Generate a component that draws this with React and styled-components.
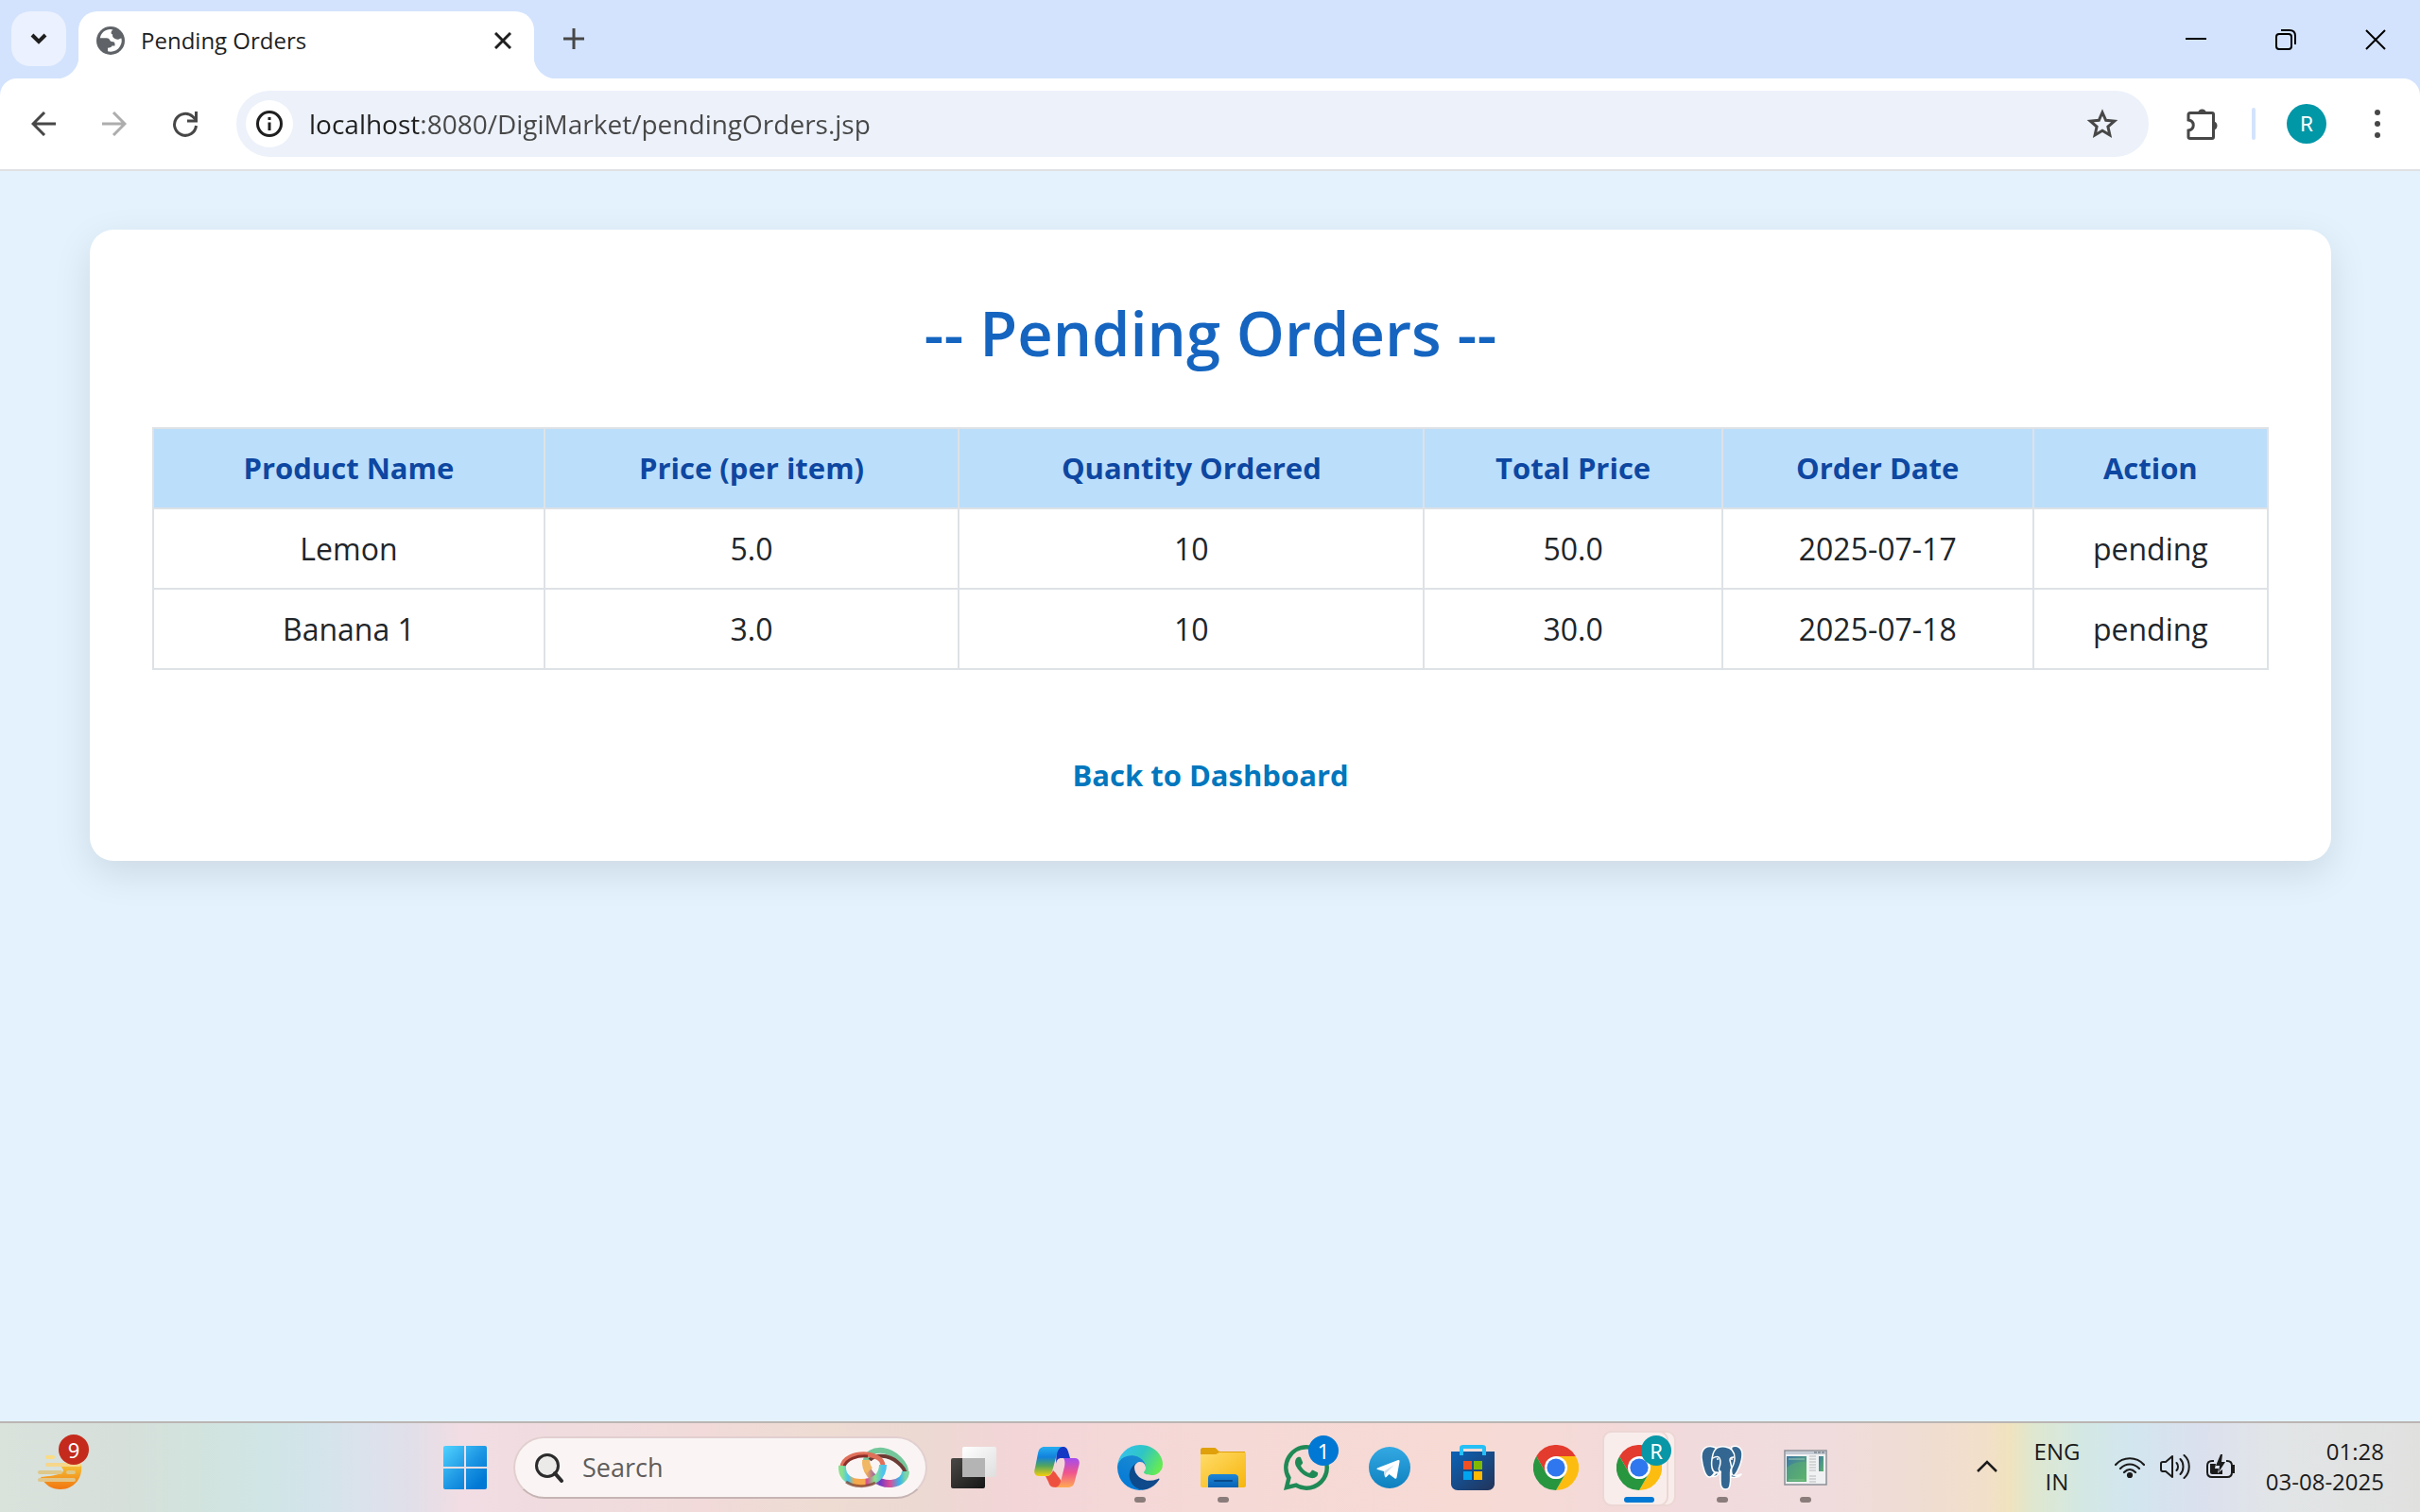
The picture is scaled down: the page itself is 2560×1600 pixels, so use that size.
import React from "react";
import styled, { createGlobalStyle, css } from "styled-components";

const GlobalStyle = createGlobalStyle`
  *, *::before, *::after { box-sizing: border-box; }
  body {
    margin: 0;
    font-family: "Open Sans", "Noto Sans", sans-serif;
    color: #212529;
  }
  button, input { font: inherit; color: inherit; }
`;

/* ---------- shell ---------- */

const Desktop = styled.div`
  display: flex;
  flex-direction: column;
  min-height: 100vh;
  background: #e3f2fd;
`;

const PlainButton = styled.button`
  display: flex;
  align-items: center;
  justify-content: center;
  flex: none;
  padding: 0;
  border: 0;
  background: none;
`;

/* ---------- browser tab strip ---------- */

const TabStrip = styled.header`
  display: flex;
  align-items: flex-end;
  height: 83px;
  padding-left: 12px;
  background: #d3e3fd;
`;

const TabSearch = styled(PlainButton)`
  width: 58px;
  height: 58px;
  margin-bottom: 13px;
  border-radius: 20px;
  background: #ebf1fe;
`;

const Tab = styled.div`
  position: relative;
  display: flex;
  align-items: center;
  width: 482px;
  height: 71px;
  margin-left: 13px;
  padding: 0 16px 10px 19px;
  border-radius: 20px 20px 0 0;
  background: #fff;

  &::before,
  &::after {
    content: "";
    position: absolute;
    bottom: 0;
    width: 24px;
    height: 24px;
  }
  &::before {
    right: 100%;
    background: radial-gradient(circle at 0 0, transparent 24px, #fff 25px);
  }
  &::after {
    left: 100%;
    background: radial-gradient(circle at 100% 0, transparent 24px, #fff 25px);
  }
`;

const TabTitle = styled.span`
  flex: 1;
  padding-left: 17px;
  font-size: 24px;
  line-height: 32px;
  color: #1f1f1f;
`;

const TabClose = styled(PlainButton)`
  width: 34px;
  height: 34px;
`;

const NewTab = styled(PlainButton)`
  width: 60px;
  height: 60px;
  margin: 0 0 12px 12px;
`;

const WindowControls = styled.div`
  display: flex;
  align-self: stretch;
  margin-left: auto;
`;

const WindowButton = styled(PlainButton)`
  width: 95px;
  height: 83px;
`;

/* ---------- browser toolbar ---------- */

const ToolbarBack = styled.div`
  background: #d3e3fd;
`;

const Toolbar = styled.nav`
  display: flex;
  align-items: center;
  height: 98px;
  padding: 0 10px 0 8px;
  border-bottom: 2px solid #e0e1e3;
  border-radius: 18px 18px 0 0;
  background: #fff;
`;

const ToolButton = styled(PlainButton)`
  width: ${(p) => p.$width || 75}px;
  height: 70px;
  margin-left: ${(p) => p.$gap || 0}px;
`;

const AddressBar = styled.div`
  display: flex;
  align-items: center;
  flex: 1;
  height: 70px;
  margin-left: 17px;
  padding: 0 10px;
  border-radius: 35px;
  background: #ecf1fa;
`;

const SiteInfo = styled(PlainButton)`
  width: 50px;
  height: 50px;
  border-radius: 50%;
  background: #fff;
`;

/* The host part is darker than the rest of the address. */
const UrlInput = styled.input`
  flex: 1;
  min-width: 0;
  margin-left: 17px;
  padding: 0;
  border: 0;
  outline: 0;
  background: linear-gradient(90deg, #1f1f1f 116px, #474747 116px);
  background-clip: text;
  -webkit-text-fill-color: transparent;
  font-size: 28px;
  line-height: 40px;
  color: #474747;
`;

const Divider = styled.span`
  width: 4px;
  height: 34px;
  margin-left: 17px;
  border-radius: 2px;
  background: #d3e3fd;
`;

const Avatar = styled(PlainButton)`
  width: 42px;
  height: 42px;
  margin-left: 33px;
  border-radius: 50%;
  background: #0097a7;
  color: #fff;
  font-family: Roboto, sans-serif;
  font-size: 22px;
`;

/* ---------- page ---------- */

const Page = styled.main`
  flex: 1;
  padding: 62px 94px 62px 95px;
`;

const Card = styled.section`
  display: flex;
  flex-direction: column;
  align-items: center;
  padding: 66px;
  border-radius: 25px;
  background: #fff;
  box-shadow: 0 13px 40px rgba(0, 0, 0, 0.1);
`;

const Title = styled.h1`
  margin: 0 0 57px;
  font-size: 65px;
  font-weight: 600;
  line-height: 86px;
  color: #1565c0;
`;

const OrdersTable = styled.table`
  width: 100%;
  table-layout: fixed;
  border-collapse: collapse;
  font-size: 32px;
  line-height: 49px;
  text-align: center;
`;

const Col = styled.col`
  width: ${(p) => p.$share}%;
`;

const cell = css`
  padding: 17px 8px;
  border: 2px solid #dee2e6;
`;

const HeadCell = styled.th`
  ${cell}
  background: #bbdefb;
  font-size: 31px;
  font-weight: 700;
  color: #0d47a1;
`;

const Cell = styled.td`
  ${cell}
`;

const BackLink = styled.a`
  margin-top: 86px;
  font-size: 31px;
  font-weight: 700;
  line-height: 50px;
  color: #0277bd;
  text-decoration: none;
`;

/* ---------- taskbar ---------- */

const Taskbar = styled.footer`
  display: grid;
  grid-template-columns: 448px auto 1fr;
  height: 96px;
  border-top: 2px solid #bbb5b3;
  background: linear-gradient(
    90deg,
    #d9e2db 0%, #d6dfda 5%, #d2e3dd 8%, #d0e5e6 11%, #d3e4ea 13%,
    #dbe2ec 15%, #e1dfe9 17%, #f1dde3 19%, #f0dcdf 23%, #f1dad9 29%,
    #eedcd3 34%, #ecd9d2 38%, #f3d5d8 42%, #f5d9d6 50%, #f7dad4 61%,
    #f1dadc 70%, #f0dcde 75%, #efdcd3 79%, #f2dfca 82%, #f0e3be 83%,
    #dfe7cf 84%, #d3e8e3 86%, #d2e6ef 88%, #dbe0ee 91%, #e2e5e7 94%,
    #e0e1df 100%
  );
  color: #1b1b1b;
`;

const WidgetButton = styled(PlainButton)`
  position: relative;
  width: 56px;
  height: 56px;
  margin: 20px 0 0 36px;
`;

const Badge = styled.span`
  position: absolute;
  top: -8px;
  right: ${(p) => p.$right || -2}px;
  width: 32px;
  height: 32px;
  border-radius: 50%;
  background: ${(p) => p.$tone};
  color: #fff;
  font-family: "Noto Sans", sans-serif;
  font-size: 22px;
  line-height: 32px;
  text-align: center;
`;

const Apps = styled.div`
  display: flex;
  align-items: center;
`;

const AppButton = styled(PlainButton)`
  position: relative;
  width: 88px;
  height: 94px;

  ${(p) =>
    p.$active &&
    css`
      &::before,
      &::after {
        content: "";
        position: absolute;
        top: 8px;
        left: 5px;
        width: 70px;
        height: 80px;
        border: 2px solid #ecd7d4;
        border-radius: 10px;
        background: #f9edeb;
      }
      &::before {
        width: 78px;
      }
    `}
`;

const IconBox = styled.span`
  position: relative;
  z-index: 1;
  display: flex;
  align-items: center;
  justify-content: center;
  width: 52px;
  height: 52px;
`;

const Indicator = styled.span`
  position: absolute;
  z-index: 1;
  bottom: 10px;
  width: ${(p) => (p.$active ? 32 : 12)}px;
  height: 6px;
  border-radius: 3px;
  background: ${(p) => (p.$active ? "#0078d4" : "#8a7c7a")};
`;

const SearchBox = styled.label`
  display: flex;
  align-items: center;
  width: 438px;
  height: 66px;
  margin: 0 5px 0 7px;
  padding: 0 16px 0 20px;
  border: 2px solid #e2cfd0;
  border-bottom-color: #c6b3b3;
  border-radius: 33px;
  background: #faf5f4;
`;

const SearchInput = styled.input`
  flex: 1;
  min-width: 0;
  margin-left: 19px;
  padding: 0;
  border: 0;
  outline: 0;
  background: none;
  font-size: 27px;
  line-height: 36px;

  &::placeholder {
    color: #5f5c5c;
    opacity: 1;
  }
`;

const Tray = styled.div`
  display: flex;
  align-items: center;
  justify-content: flex-end;
  padding-right: 38px;
  font-size: 24px;
  line-height: 32px;
`;

const TrayButton = styled(PlainButton)`
  flex-direction: column;
  width: ${(p) => p.$width}px;
  height: 94px;
  padding-bottom: 2px;
`;

const TrayStatus = styled(PlainButton)`
  gap: 16px;
  height: 94px;
  margin: 0 7px 0 21px;
  padding-bottom: 2px;
`;

const Clock = styled(PlainButton)`
  flex-direction: column;
  align-items: flex-end;
  width: 150px;
  height: 94px;
  padding-bottom: 2px;
`;

/* ---------- icons ---------- */

const Glyph = ({ w, h = w, box, sw = 3, color = "#474747", children }) => (
  <svg width={w} height={h} viewBox={box || `0 0 ${w} ${h}`} fill="none" stroke={color} strokeWidth={sw} aria-hidden="true">
    {children}
  </svg>
);

const Globe = () => (
  <svg width="30" height="30" viewBox="0 0 30 30" aria-hidden="true">
    <circle cx="15" cy="15" r="15" fill="#5f6368" />
    <path
      fill="#fff"
      d="M17.5 3.6c-1.4 1-1.9 1.8-1.9 3.2 0 1 .5 1.5 1.6 1.7-.4 1.700-.1 2.900 1 3.600 1.400.9 2.600 1.600 3.900 1.600 1.700 0 2.800-1 4.300-1.300A11.700 11.700 0 0 1 12 26.300v-3.600c2.300 0 4-.6 4.500-2.100h3v-1.900c0-2-1-2.700-3.300-2.700-1.200 0-1.600-.6-2.100-1.700-.6-1.300-1.500-2.100-3.300-2.100H3.900c.8-5.300 5.400-9.100 10.800-9.100 1 0 1.900.2 2.800.500z"
    />
  </svg>
);

const Weather = () => (
  <svg width="56" height="56" viewBox="0 0 56 56" aria-hidden="true">
    <defs>
      <linearGradient id="sun" x1="0" y1="0" x2="0" y2="1">
        <stop offset="0" stopColor="#f4c236" />
        <stop offset="1" stopColor="#f2760f" />
      </linearGradient>
    </defs>
    <path d="M28 24h22c2 13-7 26-22 26-9 0-16-4-21-13 8-1 18-1 24-6 0-3-2-4-3-7z" fill="url(#sun)" />
    <g strokeLinecap="round" strokeWidth="4" fill="none">
      <path d="M14 16h6" stroke="#fbdc84" />
      <path d="M14 24h34" stroke="#f6d68a" />
      <path d="M6 32h22M36 32h6" stroke="#dec88a" />
      <path d="M6 40h36" stroke="#e2c588" />
    </g>
  </svg>
);

const WindowsLogo = () => (
  <svg width="46" height="46" viewBox="0 0 46 46" aria-hidden="true">
    <defs>
      <linearGradient id="win" gradientUnits="userSpaceOnUse" x1="0" y1="0" x2="40" y2="40">
        <stop offset="0" stopColor="#50d3ff" />
        <stop offset=".6" stopColor="#1c95e3" />
        <stop offset="1" stopColor="#0078d4" />
      </linearGradient>
    </defs>
    <path fill="url(#win)" d="M2 0h20v22H0V2a2 2 0 0 1 2-2zM24 0h20a2 2 0 0 1 2 2v20H24zM0 24h22v22H2a2 2 0 0 1-2-2zM24 24h22v20a2 2 0 0 1-2 2H24z" />
  </svg>
);

const Rings = () => (
  <svg width="76" height="44" viewBox="0 0 76 44" fill="none" aria-hidden="true">
    <defs>
      <linearGradient id="ringA" x1="0" x2="1">
        <stop offset="0" stopColor="#8be08f" />
        <stop offset=".15" stopColor="#46c8ee" />
        <stop offset=".3" stopColor="#f6a94d" />
        <stop offset=".55" stopColor="#f6a94d" />
        <stop offset=".6" stopColor="#d84a94" />
        <stop offset=".8" stopColor="#8be08f" />
        <stop offset="1" stopColor="#4fc4ee" />
      </linearGradient>
      <linearGradient id="ringB" x1="0" x2="1">
        <stop offset="0" stopColor="#f2b05e" />
        <stop offset=".35" stopColor="#6a3bc8" />
        <stop offset=".6" stopColor="#dd4b95" />
        <stop offset=".85" stopColor="#38b6ec" />
        <stop offset="1" stopColor="#7fd6a4" />
      </linearGradient>
    </defs>
    <path d="M29 17C28 7 38 3 47 4c13 2 25 14 24 24" stroke="#74c79a" strokeWidth="6" />
    <path d="M33 14c5-6 20-6 29 2 5 4 9 9 9 14" stroke="#6d3b34" strokeWidth="4" />
    <path d="M29 16c0 14 14 24 27 23 9-1 15-6 15-13" stroke="url(#ringB)" strokeWidth="8" />
    <path d="M4 22C4 12 18 7 30 8c9 1 17 5 17 12" stroke="#e0705a" strokeWidth="5" />
    <path d="M6 21c2-8 14-12 25-11" stroke="#8c2f2a" strokeWidth="3" />
    <path d="M4 20c-1 12 8 18 20 18 14 0 23-7 23-19" stroke="url(#ringA)" strokeWidth="8" />
    <path d="M8 37c8 6 22 6 31 1" stroke="#7d3b26" strokeWidth="3" opacity=".7" />
    <path d="M29 14c0 5 2 9 4 11" stroke="#f0b765" strokeWidth="8" />
  </svg>
);

const TaskView = () => (
  <svg width="48" height="44" viewBox="0 0 48 44" aria-hidden="true">
    <defs>
      <linearGradient id="tvd" x1="0" y1="0" x2="1" y2="1">
        <stop offset="0" stopColor="#4a4846" />
        <stop offset="1" stopColor="#161616" />
      </linearGradient>
      <linearGradient id="tvl" x1="0" y1="0" x2="1" y2="1">
        <stop offset="0" stopColor="#fff" />
        <stop offset="1" stopColor="#dedede" />
      </linearGradient>
    </defs>
    <rect y="12" width="36" height="32" rx="2" fill="url(#tvd)" />
    <rect x="12" width="36" height="32" rx="2" fill="url(#tvl)" />
    <rect x="12" y="12" width="24" height="20" fill="#b5b4b4" />
  </svg>
);

const Copilot = () => (
  <svg width="48" height="44" viewBox="0 0 48 44" aria-hidden="true">
    <defs>
      <linearGradient id="cpa" x1="0" y1="0" x2="0" y2="1">
        <stop offset="0" stopColor="#27aef0" />
        <stop offset=".35" stopColor="#1181dd" />
        <stop offset=".65" stopColor="#52a55c" />
        <stop offset="1" stopColor="#f5cf0e" />
      </linearGradient>
      <linearGradient id="cpb" x1="0" y1="0" x2="0" y2="1">
        <stop offset="0" stopColor="#a34bf0" />
        <stop offset=".5" stopColor="#f0558d" />
        <stop offset="1" stopColor="#ffab52" />
      </linearGradient>
    </defs>
    <path d="M24 0h6c4 0 5 2 6 5l2 7h-9c-4 0-5 2-6 6z" fill="#1438c4" />
    <path d="M12 31c4 0 6-1 8-6l3 3c2 4 6 6 6 12-1 2-3 3-6 3-6 0-7-3-8-6z" fill="#ee5040" />
    <path d="M11 0h19c-4 1-5 4-6 8l-5 18c-1 3-3 5-7 5H5c-4 0-6-3-4-9L4 7c1-5 3-7 7-7z" fill="url(#cpa)" />
    <path d="M31 12h12c4 0 6 3 4 9l-4 15c-1 5-3 7-8 7H22c3 0 5-3 6-6l4-16c1-5 0-8-1-9z" fill="url(#cpb)" />
  </svg>
);

const Edge = () => (
  <svg width="48" height="48" viewBox="0 0 256 256" aria-hidden="true">
    <defs>
      <linearGradient id="ed1" x1="0" y1="0" x2="1" y2="0">
        <stop offset="0" stopColor="#0c4a8c" />
        <stop offset="1" stopColor="#114a8b" />
      </linearGradient>
      <linearGradient id="ed2" x1=".7" y1="0" x2=".3" y2="1">
        <stop offset="0" stopColor="#1b8ad0" />
        <stop offset="1" stopColor="#0279d8" />
      </linearGradient>
      <linearGradient id="ed3" x1="0" y1=".2" x2="1" y2=".6">
        <stop offset="0" stopColor="#35c1f1" />
        <stop offset=".5" stopColor="#2fc5c5" />
        <stop offset="1" stopColor="#66eb52" />
      </linearGradient>
    </defs>
    <path fill="url(#ed1)" d="M231 190.500c-3.400 1.800-6.900 3.400-10.500 4.700a101.900 101.900 0 0 1-35.900 6.500c-47.300 0-88.500-32.600-88.500-74.300 0-11.400 6.400-21.900 16.400-27.300-42.800 1.800-53.800 46.400-53.800 72.500 0 73.900 68.100 81.400 82.800 81.400 7.900 0 19.800-2.300 27-4.600l1.300-.4a128.300 128.300 0 0 0 66.600-52.800 4 4 0 0 0-5.400-5.700z" />
    <path fill="url(#ed2)" d="M105.700 241.400a79.200 79.200 0 0 1-22.700-21.300 80.700 80.700 0 0 1 29.500-120c3.200-1.500 8.500-4.100 15.600-4a32.400 32.400 0 0 1 25.700 13 31.900 31.900 0 0 1 6.300 18.700c0-.2 24.500-79.600-80-79.600-43.900 0-80 41.700-80 78.200a130.200 130.200 0 0 0 12.100 56 128 128 0 0 0 156.400 67 75.500 75.500 0 0 1-62.800-8z" />
    <path fill="url(#ed3)" d="M152.300 148.900c-.9 1-3.400 2.500-3.400 5.600 0 2.600 1.700 5.100 4.700 7.200 14.400 10 41.500 8.700 41.600 8.700 10.700 0 21.100-2.900 30.300-8.300a61.400 61.400 0 0 0 30.400-52.900c.3-22.400-8-37.300-11.300-43.900C223.500 23.900 177.700 0 128 0A128 128 0 0 0 0 126.200c.5-36.500 36.800-66 80-66 3.500 0 23.500.3 42 10.100 16.300 8.600 24.900 18.900 30.800 29.200 6.200 10.700 7.300 24.100 7.300 29.500s-2.700 13.300-7.800 19.900z" />
  </svg>
);

const Folder = () => (
  <svg width="48" height="44" viewBox="0 0 48 44" aria-hidden="true">
    <defs>
      <linearGradient id="fo" x1="0" y1="0" x2="1" y2="1">
        <stop offset="0" stopColor="#ffdc6a" />
        <stop offset="1" stopColor="#f7b50c" />
      </linearGradient>
      <linearGradient id="fb" x1="0" y1="0" x2="0" y2="1">
        <stop offset="0" stopColor="#1c85d8" />
        <stop offset="1" stopColor="#0963b5" />
      </linearGradient>
    </defs>
    <path d="M2 1h13c2 0 3 4 6 4h26v6H0V3c0-1 1-2 2-2z" fill="#dfa00a" />
    <path d="M0 8h15c3 0 3-2 6-2h26c1 0 1 1 1 2v33c0 1-1 2-2 2H2c-1 0-2-1-2-2z" fill="url(#fo)" />
    <path d="M8 43V33c0-3 2-4 4-4h24c2 0 4 1 4 4v10z" fill="url(#fb)" />
    <rect x="14" y="35" width="20" height="2" rx="1" fill="#084a8c" />
  </svg>
);

const WhatsApp = () => (
  <svg width="48" height="48" viewBox="0 0 24 24" fill="#1f8a56" aria-hidden="true">
    <path d="M17.472 14.382c-.297-.149-1.758-.867-2.030-.967-.273-.099-.471-.148-.670.150-.197.297-.767.966-.940 1.164-.173.199-.347.223-.644.075-.297-.150-1.255-.463-2.390-1.475-.883-.788-1.480-1.761-1.653-2.059-.173-.297-.018-.458.130-.606.134-.133.298-.347.446-.520.149-.174.198-.298.298-.497.099-.198.050-.371-.025-.520-.075-.149-.669-1.612-.916-2.207-.242-.579-.487-.500-.669-.510-.173-.008-.371-.010-.570-.010-.198 0-.520.074-.792.372-.272.297-1.040 1.016-1.040 2.479 0 1.462 1.065 2.875 1.213 3.074.149.198 2.096 3.200 5.077 4.487.709.306 1.262.489 1.694.625.712.227 1.360.195 1.871.118.571-.085 1.758-.719 2.006-1.413.248-.694.248-1.289.173-1.413-.074-.124-.272-.198-.570-.347" />
    <path fillRule="evenodd" d="M12 0a12 12 0 0 1 0 24 12 12 0 0 1-5.700-1.500L0 24l1.500-6.300A12 12 0 0 1 12 0zm0 2.300A9.700 9.700 0 0 0 3.900 17.300l-.9 3.700 3.700-.9A9.700 9.700 0 1 0 12 2.300z" />
  </svg>
);

const Telegram = () => (
  <svg width="44" height="44" viewBox="0 0 44 44" aria-hidden="true">
    <defs>
      <linearGradient id="tg" x1="0" y1="0" x2="0" y2="1">
        <stop offset="0" stopColor="#33a9e3" />
        <stop offset="1" stopColor="#0e80bf" />
      </linearGradient>
    </defs>
    <circle cx="22" cy="22" r="22" fill="url(#tg)" />
    <path fill="#fff" d="M9 22.500 31 14c1-.3 1.800.2 1.500 1.700l-3 16.800c-.3 1.300-1 1.600-2 1l-6-4.500-3 2.900c-.6.500-1.500.5-1.600-.5L16 26l-6.800-2c-1-.4-1-1 -.2-1.500z" />
    <path fill="#c9dff0" d="m16 26 11-7-8.500 8.500L17 31z" />
  </svg>
);

const Store = () => (
  <svg width="46" height="48" viewBox="0 0 46 48" aria-hidden="true">
    <defs>
      <linearGradient id="st" x1="0" y1="0" x2="1" y2="1">
        <stop offset="0" stopColor="#0b63b8" />
        <stop offset="1" stopColor="#233358" />
      </linearGradient>
    </defs>
    <path d="M0 7h46v34c0 4-3 7-7 7H7c-4 0-7-3-7-7z" fill="url(#st)" />
    <path d="M11 11V3c0-1 1-1 2-1h20c1 0 2 0 2 1v8" stroke="#25c0f5" strokeWidth="4" fill="none" />
    <path d="M13 17h9v9h-9z" fill="#f25022" />
    <path d="M24 17h9v9h-9z" fill="#7fba00" />
    <path d="M13 28h9v9h-9z" fill="#00a4ef" />
    <path d="M24 28h9v9h-9z" fill="#ffb900" />
  </svg>
);

const Chrome = () => (
  <svg width="48" height="48" viewBox="0 0 48 48" aria-hidden="true">
    <path fill="#e33b2e" d="M3.200 12A24 24 0 0 1 44.800 12H24l-10.400 18z" />
    <path fill="#fdbd10" d="M24 12h20.800A24 24 0 0 1 24 48l10.400-18z" />
    <path fill="#27963f" d="M3.200 12A24 24 0 0 0 24 48l10.400-18a12 12 0 0 1-20.800 0z" />
    <circle cx="24" cy="24" r="12" fill="#fff" />
    <circle cx="24" cy="24" r="9.600" fill="#2f77ee" />
  </svg>
);

const Postgres = () => (
  <svg width="48" height="48" viewBox="0 0 48 48" strokeLinejoin="round" strokeLinecap="round" aria-hidden="true">
    <g fill="#336791" stroke="#fff" strokeWidth="1.500">
      <path d="M34 2c6-2 11 1 11 8 0 8-5 20-10 24-3-8-4-22-1-32z" />
      <path d="M17 3C9-1 1 3 2 14c1 9 4 21 9 20 3-1 5-5 6-8z" />
      <path d="M14 10C16 2 23 1 27 2c7 1 10 6 10 12 0 5-2 9-4 12-1 4 0 8-.5 13-.5 7-2 8-5.500 8s-5-3-5-9V28c-4 3-8 1-9-4s0-10 1-14z" />
      <path d="M33 31c3 2 7 2 11 0-2 3-7 4-11 3zM20 31c-2 2-5 3-7 2 3-1 4-3 5-4z" />
    </g>
    <g fill="none" stroke="#fff" strokeWidth="1.500">
      <path d="M14 14c3-2 6-2 7 0s1 6 0 9c-1 2-1 4 1 6M36 13c-2 0-4 1-4 3 1 5 3 9 1 14" />
    </g>
    <circle cx="19" cy="15" r="1" fill="#fff" />
    <circle cx="34" cy="15" r="1" fill="#fff" />
  </svg>
);

const AppWindow = () => (
  <svg width="46" height="38" viewBox="0 0 46 38" aria-hidden="true">
    <defs>
      <linearGradient id="aw" x1="0" y1="0" x2="1" y2="1">
        <stop offset="0" stopColor="#3c78a4" />
        <stop offset="1" stopColor="#5fb36a" />
      </linearGradient>
    </defs>
    <rect x="1" y="1" width="44" height="36" fill="#f0f1f2" stroke="#8b8f96" strokeWidth="1.500" />
    <path d="M2 2h42v3H2z" fill="#c5ccd6" />
    <path d="M32 3h11" stroke="#7f858d" strokeWidth="1.500" strokeDasharray="3 1" />
    <path d="M3 7h21v27H3z" fill="url(#aw)" />
    <path d="M5 10h17M5 32h17" stroke="#9fc9b6" />
    <path d="M3 19c7-6 14-6 21-6v21H3z" fill="#5db56a" opacity=".45" />
    <path d="M27 7h7M27 10h7M27 13h7M27 16h7M27 19h7M27 22h7M27 28h7M27 31h7M27 34h7" stroke="#b7b9bb" />
    <path d="M37 7h5v16h-5z" fill="url(#aw)" />
  </svg>
);

const Wifi = () => (
  <Glyph w={32} h={26} color="#1b1b1b" sw={2.200}>
    <path d="M1 11c8-9 22-9 30 0M6 15c6-6 14-6 20 0M10 19c4-4 8-4 12 0" strokeLinecap="round" />
    <circle cx="16" cy="22" r="2" fill="#1b1b1b" />
  </Glyph>
);

const Volume = () => (
  <Glyph w={32} h={26} color="#1b1b1b" sw={2}>
    <path d="M1 9.500C1 8.500 2 8 3 8h3l7-6v22l-7-6H3c-1 0-2-1-2-2z" strokeLinejoin="round" />
    <path d="M17.500 9c2 2 2 6 0 8M21.500 5c4 4 4 12 0 16M25.500 1c7 6 7 18 0 24" strokeLinecap="round" />
  </Glyph>
);

const Battery = () => (
  <Glyph w={32} h={26} color="#1b1b1b" sw={2}>
    <path d="M9 7H7c-3 0-5 2-5 5v7c0 3 2 5 5 5h16c3 0 5-2 5-5v-7c0-3-2-5-5-5h-1" />
    <path d="M5 10h6l-1 5h4l-1 5 5-4v5H7c-1 0-2-1-2-2z" fill="#1b1b1b" stroke="none" />
    <path d="m16 0-5 12h4l-1 7 7-11h-4l1-8z" fill="#1b1b1b" stroke="none" />
    <path d="M29.500 11v9" strokeWidth="3" />
  </Glyph>
);

/* ---------- data ---------- */

const columns = [
  { label: "Product Name", share: 18.5 },
  { label: "Price (per item)", share: 19.6 },
  { label: "Quantity Ordered", share: 22 },
  { label: "Total Price", share: 14.1 },
  { label: "Order Date", share: 14.7 },
  { label: "Action", share: 11.1 },
];

const orders = [
  ["Lemon", "5.0", "10", "50.0", "2025-07-17", "pending"],
  ["Banana 1", "3.0", "10", "30.0", "2025-07-18", "pending"],
];

const apps = [
  { name: "Task View", icon: <TaskView /> },
  { name: "Copilot", icon: <Copilot /> },
  { name: "Edge", icon: <Edge />, running: true },
  { name: "File Explorer", icon: <Folder />, running: true },
  { name: "WhatsApp", icon: <WhatsApp />, badge: "1", tone: "#0078d4" },
  { name: "Telegram", icon: <Telegram /> },
  { name: "Microsoft Store", icon: <Store /> },
  { name: "Chrome", icon: <Chrome /> },
  { name: "Chrome profile", icon: <Chrome />, active: true, badge: "R", tone: "#0797a7" },
  { name: "PostgreSQL", icon: <Postgres />, running: true },
  { name: "Application", icon: <AppWindow />, running: true },
];

/* ---------- sections ---------- */

function BrowserChrome() {
  return (
    <>
      <TabStrip>
        <TabSearch aria-label="Search tabs">
          <Glyph w={18} h={14} sw={4} color="#1f1f1f"><path d="m2 3 7 7 7-7" /></Glyph>
        </TabSearch>
        <Tab>
          <Globe />
          <TabTitle>Pending Orders</TabTitle>
          <TabClose aria-label="Close tab">
            <Glyph w={18} color="#1f1f1f"><path d="m1 1 16 16M17 1 1 17" /></Glyph>
          </TabClose>
        </Tab>
        <NewTab aria-label="New tab">
          <Glyph w={22}><path d="M11 0v22M0 11h22" /></Glyph>
        </NewTab>
        <WindowControls>
          <WindowButton aria-label="Minimise">
            <Glyph w={22} color="#000" sw={2}><path d="M0 10h22" /></Glyph>
          </WindowButton>
          <WindowButton aria-label="Restore">
            <Glyph w={22} color="#000" sw={2}>
              <rect x="1" y="5" width="16" height="16" rx="3" />
              <path d="M6 1h9c4 0 6 2 6 6v9" />
            </Glyph>
          </WindowButton>
          <WindowButton aria-label="Close window">
            <Glyph w={22} color="#000" sw={2}><path d="m1 1 20 20M21 1 1 21" /></Glyph>
          </WindowButton>
        </WindowControls>
      </TabStrip>
      <ToolbarBack>
        <Toolbar>
          <ToolButton aria-label="Back">
            <Glyph w={26}><path d="M26 13H2M14 1 2 13l12 12" /></Glyph>
          </ToolButton>
          <ToolButton aria-label="Forward">
            <Glyph w={26} color="#adadad"><path d="M0 13h24M12 1l12 12-12 12" /></Glyph>
          </ToolButton>
          <ToolButton aria-label="Reload">
            <Glyph w={28}>
              <path d="M25.500 16A11.500 11.500 0 1 1 22 6.500l3.500 3.500" />
              <path d="M25.500 1v10H16" />
            </Glyph>
          </ToolButton>
          <AddressBar>
            <SiteInfo aria-label="Site information">
              <Glyph w={28} color="#1f1f1f">
                <circle cx="14" cy="14" r="12.500" />
                <path d="M14 12.500V21M14 7v3" />
              </Glyph>
            </SiteInfo>
            <UrlInput aria-label="Address" defaultValue="localhost:8080/DigiMarket/pendingOrders.jsp" />
            <ToolButton $width={78} aria-label="Bookmark">
              <Glyph w={34} h={32}>
                <path d="m17 4 3.700 8.300 9 .8-6.800 6 2 8.900L17 23.300 9.100 28l2-8.900-6.800-6 9-.8z" />
              </Glyph>
            </ToolButton>
          </AddressBar>
          <ToolButton $width={70} $gap={22} aria-label="Extensions">
            <Glyph w={36} h={36}>
              <path d="M3 8.500c0-1.500 1-2 2-2h23c1 0 1.500.5 1.500 1.500v24c0 1-.5 1.500-1.500 1.500H5c-1 0-2-.5-2-1.500v-7c7-1 7-10 0-11z" />
              <path d="M13 6.500a4.500 4 0 0 1 9 0zM29.500 15.500a4 4.500 0 0 1 0 9z" fill="#474747" stroke="none" />
            </Glyph>
          </ToolButton>
          <Divider />
          <Avatar aria-label="Profile">R</Avatar>
          <ToolButton $width={70} $gap={19} aria-label="Menu">
            <Glyph w={6} h={30}>
              <g fill="#474747" stroke="none">
                <circle cx="3" cy="3" r="3" />
                <circle cx="3" cy="15" r="3" />
                <circle cx="3" cy="27" r="3" />
              </g>
            </Glyph>
          </ToolButton>
        </Toolbar>
      </ToolbarBack>
    </>
  );
}

function PendingOrders() {
  return (
    <Page>
      <Card>
        <Title>-- Pending Orders --</Title>
        <OrdersTable>
          <colgroup>
            {columns.map((c) => <Col key={c.label} $share={c.share} />)}
          </colgroup>
          <thead>
            <tr>
              {columns.map((c) => <HeadCell key={c.label} scope="col">{c.label}</HeadCell>)}
            </tr>
          </thead>
          <tbody>
            {orders.map((row) => (
              <tr key={row[0]}>
                {row.map((value, i) => <Cell key={columns[i].label}>{value}</Cell>)}
              </tr>
            ))}
          </tbody>
        </OrdersTable>
        <BackLink href="#dashboard">Back to Dashboard</BackLink>
      </Card>
    </Page>
  );
}

function WindowsTaskbar() {
  return (
    <Taskbar>
      <WidgetButton aria-label="Widgets">
        <Weather />
        <Badge $tone="#c42b1c">9</Badge>
      </WidgetButton>
      <Apps>
        <AppButton aria-label="Start"><WindowsLogo /></AppButton>
        <SearchBox>
          <Glyph w={32} color="#2b2b2b" sw={3}>
            <circle cx="14" cy="14" r="11.500" fill="#ece9e9" />
            <path d="m22 22 7 8" strokeWidth="4" strokeLinecap="round" />
          </Glyph>
          <SearchInput aria-label="Search" placeholder="Search" />
          <Rings />
        </SearchBox>
        {apps.map((app) => (
          <AppButton key={app.name} aria-label={app.name} $active={app.active}>
            <IconBox>
              {app.icon}
              {app.badge && <Badge $tone={app.tone} $right={-8}>{app.badge}</Badge>}
            </IconBox>
            {(app.running || app.active) && <Indicator $active={app.active} />}
          </AppButton>
        ))}
      </Apps>
      <Tray>
        <TrayButton $width={68} aria-label="Show hidden icons">
          <Glyph w={22} h={14} color="#1b1b1b" sw={2.500}><path d="m1 12 10-10 10 10" /></Glyph>
        </TrayButton>
        <TrayButton $width={80}>
          <span>ENG</span>
          <span>IN</span>
        </TrayButton>
        <TrayStatus aria-label="Network, volume and battery">
          <Wifi />
          <Volume />
          <Battery />
        </TrayStatus>
        <Clock>
          <span>01:28</span>
          <span>03-08-2025</span>
        </Clock>
      </Tray>
    </Taskbar>
  );
}

export default function App() {
  return (
    <Desktop>
      <GlobalStyle />
      <BrowserChrome />
      <PendingOrders />
      <WindowsTaskbar />
    </Desktop>
  );
}
